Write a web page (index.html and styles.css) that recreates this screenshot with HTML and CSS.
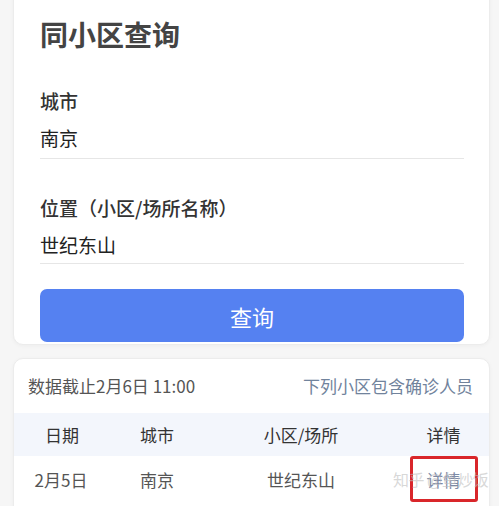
FILE: index.html
```html
<!DOCTYPE html>
<html lang="zh-CN">
<head>
    <meta charset="UTF-8">
    <title>同小区查询</title>
    <link rel="stylesheet" href="styles.css">
</head>
<body>

    <!-- 查询表单 -->
    <div class="card card-form">
        <h1 class="titulo">同小区查询</h1>

        <div class="campo">
            <div class="rotulo">城市</div>
            <div class="valor">南京</div>
        </div>

        <div class="campo">
            <div class="rotulo">位置（小区/场所名称）</div>
            <div class="valor">世纪东山</div>
        </div>

        <button class="btn-consultar">查询</button>
    </div>

    <!-- 结果 -->
    <div class="card card-result">
        <div class="result-topo">
            <span class="data-corte">数据截止2月6日 11:00</span>
            <span class="aviso">下列小区包含确诊人员</span>
        </div>

        <div class="tabela">
            <div class="linha cabecalho">
                <div>日期</div>
                <div>城市</div>
                <div>小区/场所</div>
                <div>详情</div>
            </div>
            <div class="linha">
                <div class="data">2月5日</div>
                <div>南京</div>
                <div>世纪东山</div>
                <div><span class="detalhe">详情</span></div>
            </div>
        </div>

        <div class="marca">知乎 @鱼炒饭</div>
    </div>

</body>
</html>
```

FILE: styles.css
```css
body {
    margin: 0;
    background-color: #f6f6f6;
    font-family: "Noto Sans CJK SC", "Noto Sans", sans-serif;
    overflow: hidden;
}

/* Cartões brancos */
.card {
    margin: 0 9px 0 13px;
    background-color: #fff;
    border: 1px solid #ececec;
    border-radius: 10px;
    box-shadow: 0 1px 4px rgba(0, 0, 0, 0.04);
}

.card-form {
    margin-top: -12px;
    padding: 25px 25px 2px 26px;
}

.titulo {
    margin: 0;
    font-size: 28px;
    line-height: 40px;
    font-weight: bold;
    color: #444;
}

.campo {
    border-bottom: 1px solid #e6e6e6;
}

.campo:first-of-type {
    margin-top: 34px;
    padding-bottom: 7px;
}

.campo + .campo {
    margin-top: 36px;
    padding-bottom: 5px;
}

.rotulo {
    font-size: 19px;
    line-height: 26px;
    font-weight: 500;
    color: #333;
}

.valor {
    margin-top: 11px;
    font-size: 19px;
    line-height: 26px;
    color: #222;
}

/* Botão de consulta */
.btn-consultar {
    display: block;
    width: 100%;
    height: 53px;
    margin-top: 25px;
    border: none;
    border-radius: 7px;
    background-color: #5581f1;
    color: #fff;
    font-family: inherit;
    font-size: 22px;
}

.card-result {
    position: relative;
    margin-top: 13px;
    height: 200px;
}

.result-topo {
    display: flex;
    justify-content: space-between;
    padding: 15px 16px 0 14px;
    font-size: 17px;
    line-height: 24px;
}

.data-corte {
    color: #555;
}

.aviso {
    color: #71839c;
}

/* Tabela de resultados */
.tabela {
    margin-top: 15px;
}

.linha {
    display: grid;
    grid-template-columns: 96px 94px 194px 1fr;
    align-items: center;
    text-align: center;
    font-size: 17px;
    height: 45px;
    color: #555;
}

.cabecalho {
    height: 43px;
    background-color: #f3f6fc;
    color: #333;
}

.data {
    padding-right: 2px;
}

.detalhe {
    display: inline-flex;
    align-items: center;
    justify-content: center;
    width: 62px;
    height: 40px;
    border: 3px solid #d9262a;
    border-radius: 3px;
    color: #7d8aa6;
}

/* Marca d'água */
.marca {
    position: absolute;
    left: 379px;
    top: 108px;
    font-size: 16px;
    letter-spacing: -0.5px;
    white-space: nowrap;
    color: rgba(190, 190, 190, 0.6);
}
```
